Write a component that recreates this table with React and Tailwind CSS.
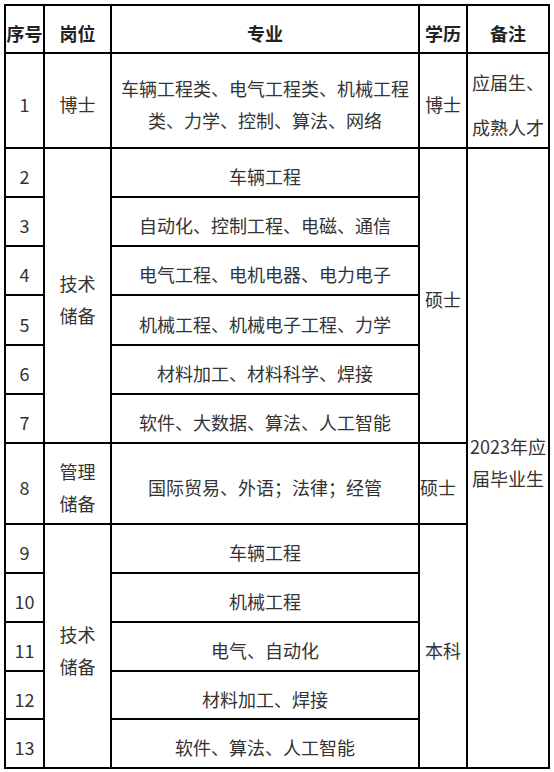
import React from "react";

const cell =
  "border-r-2 border-b-2 border-black flex items-center justify-center text-center pt-[7px] leading-[32px]";

export default function App() {
  const majors = [
    "车辆工程",
    "自动化、控制工程、电磁、通信",
    "电气工程、电机电器、电力电子",
    "机械工程、机械电子工程、力学",
    "材料加工、材料科学、焊接",
    "软件、大数据、算法、人工智能",
  ];
  const majors2 = [
    "车辆工程",
    "机械工程",
    "电气、自动化",
    "材料加工、焊接",
    "软件、算法、人工智能",
  ];
  const rowStarts = ["row-start-3", "row-start-4", "row-start-5", "row-start-6", "row-start-7", "row-start-8"];
  const rowStarts2 = ["row-start-10", "row-start-11", "row-start-12", "row-start-13", "row-start-14"];

  return (
    <div
      className="bg-white w-[554px] h-[772px] pt-[4px] pl-[4px] text-[18px] text-[#333333]"
      style={{ fontFamily: '"Noto Sans CJK SC", "Noto Sans", sans-serif' }}
    >
      <div className="grid w-fit border-l-2 border-t-2 border-black grid-cols-[39px_67px_308px_48px_82px] grid-rows-[48px_95px_49px_49px_49px_50px_49px_49px_81px_49px_49px_49px_48px_49px]">
        {/* header */}
        <div className={`${cell} col-start-1 row-start-1 font-bold text-[#222222]`}>序号</div>
        <div className={`${cell} col-start-2 row-start-1 font-bold text-[#222222]`}>岗位</div>
        <div className={`${cell} col-start-3 row-start-1 font-bold text-[#222222]`}>专业</div>
        <div className={`${cell} col-start-4 row-start-1 font-bold text-[#222222]`}>学历</div>
        <div className={`${cell} col-start-5 row-start-1 font-bold text-[#222222]`}>备注</div>

        {/* row 1 */}
        <div className={`${cell} col-start-1 row-start-2`}>1</div>
        <div className={`${cell} col-start-2 row-start-2`}>博士</div>
        <div className={`${cell} col-start-3 row-start-2`}>
          <div>
            <div>车辆工程类、电气工程类、机械工程</div>
            <div>类、力学、控制、算法、网络</div>
          </div>
        </div>
        <div className={`${cell} col-start-4 row-start-2`}>博士</div>
        <div className={`${cell} col-start-5 row-start-2`}>
          <div className="flex flex-col gap-[13px]">
            <div>应届生、</div>
            <div>成熟人才</div>
          </div>
        </div>

        {/* rows 2-7 */}
        {majors.map((m, i) => (
          <React.Fragment key={m}>
            <div className={`${cell} col-start-1 ${rowStarts[i]}`}>{i + 2}</div>
            <div className={`${cell} col-start-3 ${rowStarts[i]}`}>{m}</div>
          </React.Fragment>
        ))}
        <div className={`${cell} col-start-2 row-start-3 row-span-6`}>
          <div>
            <div>技术</div>
            <div>储备</div>
          </div>
        </div>
        <div className={`${cell} col-start-4 row-start-3 row-span-6`}>硕士</div>
        <div className={`${cell} col-start-5 row-start-3 row-span-12`}>
          <div>
            <div>2023年应</div>
            <div>届毕业生</div>
          </div>
        </div>

        {/* row 8 */}
        <div className={`${cell} col-start-1 row-start-9`}>8</div>
        <div className={`${cell} col-start-2 row-start-9`}>
          <div>
            <div>管理</div>
            <div>储备</div>
          </div>
        </div>
        <div className={`${cell} col-start-3 row-start-9`}>国际贸易、外语；法律；经管</div>
        <div className="border-r-2 border-b-2 border-black flex items-center justify-start pt-[7px] leading-[32px] col-start-4 row-start-9">
          硕士
        </div>

        {/* rows 9-13 */}
        {majors2.map((m, i) => (
          <React.Fragment key={m + i}>
            <div className={`${cell} col-start-1 ${rowStarts2[i]}`}>{i + 9}</div>
            <div className={`${cell} col-start-3 ${rowStarts2[i]}`}>{m}</div>
          </React.Fragment>
        ))}
        <div className={`${cell} col-start-2 row-start-10 row-span-5`}>
          <div>
            <div>技术</div>
            <div>储备</div>
          </div>
        </div>
        <div className={`${cell} col-start-4 row-start-10 row-span-5`}>本科</div>
      </div>
    </div>
  );
}
